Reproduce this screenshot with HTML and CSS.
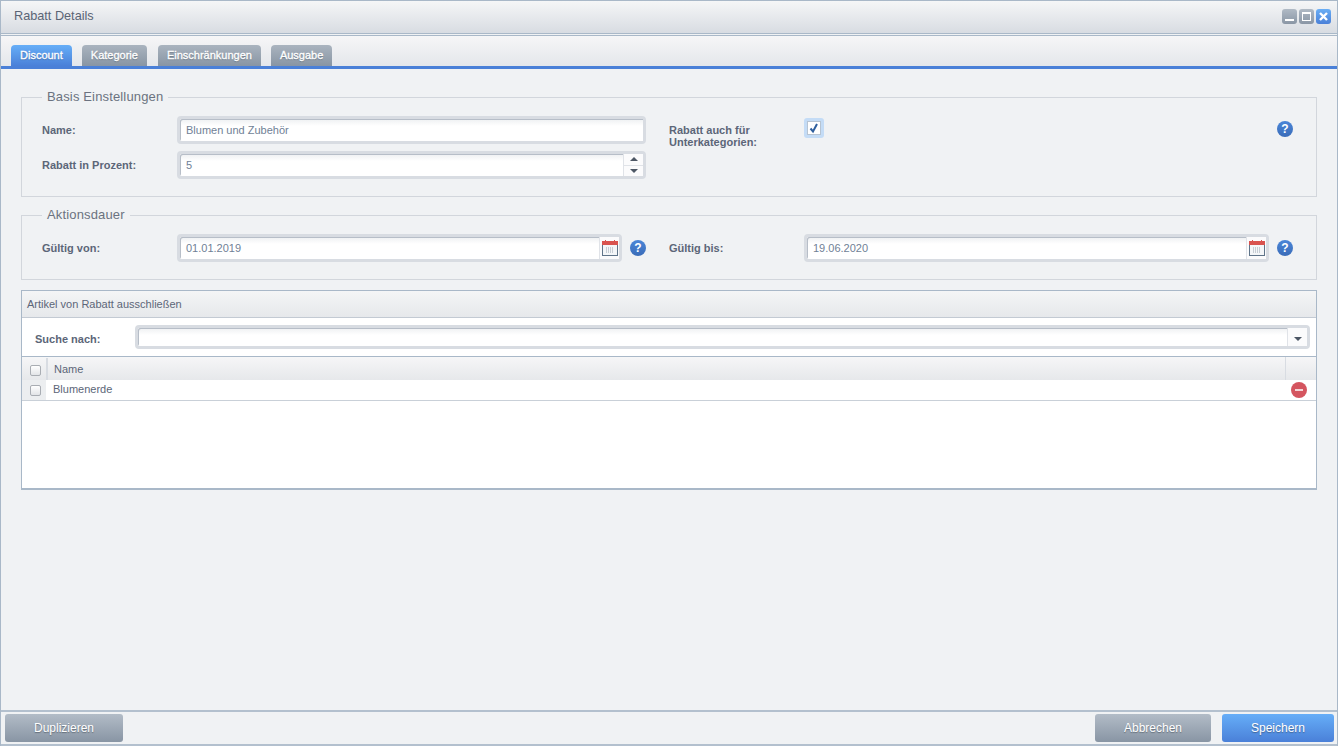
FILE: index.html
```html
<!DOCTYPE html>
<html lang="de">
<head>
    <meta charset="UTF-8">
    <title>Rabatt Details</title>
    <link rel="stylesheet" href="styles.css">
</head>
<body>
    <div class="window">
        <!-- Title bar -->
        <div class="title-bar">
            <div class="title">Rabatt Details</div>
            <div class="win-buttons">
                <div class="win-btn"><svg width="15" height="15" viewBox="0 0 15 15"><rect x="3" y="10" width="9" height="2" fill="#fff"/></svg></div>
                <div class="win-btn"><svg width="15" height="15" viewBox="0 0 15 15"><rect x="3.5" y="3.5" width="8" height="8" fill="none" stroke="#fff"/><rect x="3" y="3" width="9" height="2" fill="#fff"/></svg></div>
                <div class="win-btn win-btn-close"><svg width="15" height="15" viewBox="0 0 15 15"><path d="M4 4l7 7M11 4l-7 7" stroke="#fff" stroke-width="2.4"/></svg></div>
            </div>
        </div>

        <!-- Tabs -->
        <div class="tab-bar">
            <div class="tab tab-active">Discount</div>
            <div class="tab">Kategorie</div>
            <div class="tab tab-wide">Einschränkungen</div>
            <div class="tab">Ausgabe</div>
        </div>

        <div class="content">
            <fieldset class="group group-basis">
                <legend>Basis Einstellungen</legend>
                <div class="col col-left">
                    <div class="row">
                        <label>Name:</label>
                        <div class="field field-wide"><div class="field-value">Blumen und Zubehör</div></div>
                    </div>
                    <div class="row">
                        <label>Rabatt in Prozent:</label>
                        <div class="field field-wide">
                            <div class="field-value">5</div>
                            <div class="spinner">
                                <div class="spin-btn"><span class="arrow-up"></span></div>
                                <div class="spin-btn"><span class="arrow-down"></span></div>
                            </div>
                        </div>
                    </div>
                </div>
                <div class="col col-right">
                    <label class="label-two">Rabatt auch für Unterkategorien:</label>
                    <div class="checkbox-focus">
                        <svg width="12" height="12" viewBox="0 0 12 12"><path d="M2.5 6.5l2.5 3 4-7.5" fill="none" stroke="#2f5f9e" stroke-width="2"/></svg>
                    </div>
                    <div class="help help-end">?</div>
                </div>
            </fieldset>

            <fieldset class="group group-dates">
                <legend>Aktionsdauer</legend>
                <div class="row">
                    <label>Gültig von:</label>
                    <div class="field field-date">
                        <div class="field-value">01.01.2019</div>
                        <div class="trigger">
                            <svg width="16" height="16" viewBox="0 0 16 16">
                                <rect x="0.5" y="1.5" width="15" height="14" fill="#f4f6f8" stroke="#5f7489"/>
                                <rect x="0" y="1" width="16" height="4" fill="#d9534f"/>
                                <rect x="3" y="0" width="1" height="2" fill="#d9534f"/>
                                <rect x="12" y="0" width="1" height="2" fill="#d9534f"/>
                                <path d="M4 8h8M4 10h8M4 12h8" stroke="#9aa5b1" stroke-width="1" stroke-dasharray="1 1"/>
                            </svg>
                        </div>
                    </div>
                    <div class="help">?</div>
                    <label class="label-until">Gültig bis:</label>
                    <div class="field field-date field-date-end">
                        <div class="field-value">19.06.2020</div>
                        <div class="trigger">
                            <svg width="16" height="16" viewBox="0 0 16 16">
                                <rect x="0.5" y="1.5" width="15" height="14" fill="#f4f6f8" stroke="#5f7489"/>
                                <rect x="0" y="1" width="16" height="4" fill="#d9534f"/>
                                <rect x="3" y="0" width="1" height="2" fill="#d9534f"/>
                                <rect x="12" y="0" width="1" height="2" fill="#d9534f"/>
                                <path d="M4 8h8M4 10h8M4 12h8" stroke="#9aa5b1" stroke-width="1" stroke-dasharray="1 1"/>
                            </svg>
                        </div>
                    </div>
                    <div class="help">?</div>
                </div>
            </fieldset>

            <!-- Excluded articles -->
            <div class="panel">
                <div class="panel-head">Artikel von Rabatt ausschließen</div>
                <div class="search-row">
                    <label>Suche nach:</label>
                    <div class="field field-search">
                        <div class="field-value"></div>
                        <div class="trigger trigger-combo"><span class="arrow-down"></span></div>
                    </div>
                </div>
                <div class="grid-head">
                    <div class="cell-check"><span class="check"></span></div>
                    <div class="cell-name">Name</div>
                    <div class="cell-action"></div>
                </div>
                <div class="grid-row">
                    <div class="cell-check"><span class="check"></span></div>
                    <div class="cell-name cell-name-row">Blumenerde</div>
                    <div class="cell-action"><span class="remove"></span></div>
                </div>
            </div>
        </div>

        <div class="footer">
            <button class="btn btn-dup">Duplizieren</button>
            <div class="spacer"></div>
            <button class="btn btn-cancel">Abbrechen</button>
            <button class="btn btn-save">Speichern</button>
        </div>
    </div>
</body>
</html>
```

FILE: styles.css
```css
* {
    box-sizing: border-box;
}

html, body {
    margin: 0;
    height: 100%;
    overflow: hidden;
}

body {
    font-family: "Liberation Sans", Arial, sans-serif;
    font-size: 11px;
    color: #5c6678;
}

.window {
    height: 746px;
    display: flex;
    flex-direction: column;
    background: #f0f2f4;
    border-left: 1px solid #a9b8c8;
    border-right: 1px solid #a9b8c8;
}

/* Title bar */
.title-bar {
    height: 34px;
    flex: none;
    display: flex;
    align-items: center;
    justify-content: space-between;
    padding: 0 6px 2px 13px;
    border-top: 1px solid #a9b8c8;
    border-bottom: 1px solid #a9b8c8;
    background: linear-gradient(#f5f6f7, #d8dce2);
}

.title {
    font-size: 12.7px;
    color: #5a6475;
}

.win-buttons {
    display: flex;
    gap: 2px;
    margin-top: 1px;
}

.win-btn {
    width: 15px;
    height: 15px;
    border-radius: 3px;
    background: linear-gradient(#b0bac5, #8a96a5);
}

.win-btn svg {
    display: block;
}

.win-btn-close {
    background: linear-gradient(#6aaef5, #4a80d8);
}

/* Tabs */
.tab-bar {
    height: 34px;
    flex: none;
    margin-top: 1px;
    display: flex;
    align-items: flex-end;
    gap: 10px;
    padding-left: 10px;
    border-top: 1px solid #a9b8c8;
    border-bottom: 3px solid #4a80d8;
    background: linear-gradient(#f6f6f7, #e4e7eb);
}

.tab {
    height: 21px;
    line-height: 21px;
    padding: 0 9px;
    border-radius: 4px 4px 0 0;
    background: linear-gradient(#aab4bf, #8895a4);
    color: #fff;
    font-size: 11px;
    -webkit-text-stroke: 0.3px #fff;
    text-shadow: 0 1px 1px rgba(50, 60, 70, 0.4);
}

.tab-active {
    background: linear-gradient(#66aef8, #4a80d8);
}

.tab-wide {
    margin-left: 1px;
}

/* Content */
.content {
    flex: 1;
    padding: 0 20px;
    min-height: 0;
}

.group {
    margin: 0;
    padding: 10px 0 0 20px;
    border: 1px solid #d2d6dc;
}

.group legend {
    padding: 0 5px 2px;
    font-size: 13px;
    line-height: 15px;
    color: #6b7280;
    letter-spacing: 0.15px;
}

.group-basis {
    height: 108px;
    margin-top: 20px;
    display: flex;
}

.group-dates {
    height: 73px;
    margin-top: 10px;
}

label {
    font-weight: bold;
    font-size: 11px;
    color: #5c6678;
}

.row {
    display: flex;
    align-items: center;
    height: 28px;
}

.row label {
    width: 135px;
    flex: none;
}

.col-left .row + .row {
    margin-top: 7px;
}

.col-left {
    width: 604px;
    flex: none;
}

.col-right {
    flex: 1;
    display: flex;
    align-items: flex-start;
    padding-left: 23px;
}

.label-two {
    width: 135px;
    flex: none;
    line-height: 12px;
    margin-top: 8px;
}

/* Inputs */
.field {
    display: flex;
    height: 28px;
    border: 3px solid #d8dce2;
    border-radius: 4px;
    background: #fff;
}

.field-value {
    flex: 1;
    padding-left: 6px;
    line-height: 22px;
    font-size: 11px;
    color: #707f96;
    border-radius: 2px 0 0 2px;
    background: linear-gradient(#eef0f2, #fff 7px);
    box-shadow: inset 1px 1px 0 #b7bec8;
}

.field-wide {
    width: 469px;
}

.field-date {
    width: 445px;
    flex: none;
}

.field-date-end {
    width: 465px;
}

.field-search {
    width: 1175px;
    height: 24px;
}

.spinner {
    width: 20px;
    display: flex;
    flex-direction: column;
    gap: 1px;
    border-left: 1px solid #e0e3e8;
    background: #e0e3e8;
}

.spin-btn {
    flex: 1;
    display: flex;
    align-items: center;
    justify-content: center;
    background: #fbfbfc;
}

.arrow-up, .arrow-down {
    width: 0;
    height: 0;
    border-left: 4px solid transparent;
    border-right: 4px solid transparent;
}

.arrow-up {
    border-bottom: 4px solid #4c5664;
}

.arrow-down {
    border-top: 4px solid #4c5664;
}

.trigger {
    width: 20px;
    flex: none;
    display: flex;
    align-items: center;
    justify-content: center;
    border-left: 1px solid #e0e3e8;
    background: #fbfbfc;
}

.trigger-combo {
    padding-top: 3px;
}

/* Checkbox and help */
.checkbox-focus {
    width: 20px;
    height: 20px;
    margin-top: 2px;
    border: 3px solid #c4dcf6;
    border-radius: 3px;
    background: #fff;
    box-shadow: inset 0 0 0 1px #b7c4d2;
    display: flex;
    align-items: center;
    justify-content: center;
}

.help {
    width: 16px;
    height: 16px;
    flex: none;
    margin-left: 8px;
    border-radius: 50%;
    background: linear-gradient(#4a86d8, #3a6cb8);
    color: #fff;
    font-size: 12px;
    font-weight: bold;
    line-height: 16px;
    text-align: center;
}

.help-end {
    margin-left: auto;
    margin-top: 5px;
    margin-right: 23px;
}

.row .label-until {
    margin-left: 23px;
}

/* Panel */
.panel {
    margin-top: 10px;
    height: 200px;
    border: 1px solid #a9b8c8;
    border-bottom-width: 2px;
    background: #fff;
}

.panel-head {
    height: 27px;
    line-height: 26px;
    padding-left: 5px;
    font-size: 11px;
    color: #5c6678;
    border-bottom: 1px solid #c3cad3;
    background: linear-gradient(#f4f5f6, #e6e8eb);
}

.search-row {
    height: 39px;
    display: flex;
    align-items: center;
    justify-content: space-between;
    padding: 0 6px 0 13px;
    border-bottom: 1px solid #a9b8c8;
}

.search-row label {
    margin-top: 4px;
}

.grid-head {
    height: 23px;
    display: flex;
    align-items: stretch;
    background: linear-gradient(#f6f6f7, #e6e8eb);
}

.grid-row {
    height: 21px;
    display: flex;
    border-bottom: 1px solid #c9d0d8;
}

.cell-check {
    width: 26px;
    flex: none;
    display: flex;
    align-items: center;
    justify-content: center;
    padding-left: 2px;
    background: #eceef0;
    border-right: 2px solid #fff;
}

.grid-head .cell-check {
    background: none;
    border-right: 2px solid #d8dce2;
    margin-top: 1px;
    padding-top: 2px;
}

.check {
    width: 11px;
    height: 11px;
    border: 1px solid #a9adb3;
    border-radius: 2px;
    background: linear-gradient(#fff, #e2e4e7);
}

.cell-name {
    flex: 1;
    padding-left: 6px;
    line-height: 24px;
    font-size: 11px;
    color: #5c6678;
}

.grid-row .cell-name-row {
    padding-left: 5px;
    line-height: 18px;
}

.cell-action {
    width: 31px;
    flex: none;
    display: flex;
    align-items: center;
    justify-content: flex-end;
    padding-right: 9px;
}

.grid-head .cell-action {
    border-left: 1px solid #d8dce2;
}

.remove {
    width: 16px;
    height: 16px;
    border-radius: 50%;
    background: #d4555f;
    position: relative;
}

.remove::after {
    content: "";
    position: absolute;
    left: 4px;
    top: 7px;
    width: 8px;
    height: 2px;
    background: #f3d5d7;
}

/* Footer */
.footer {
    height: 36px;
    flex: none;
    display: flex;
    align-items: center;
    padding: 0 3px 1px 4px;
    border-top: 2px solid #b3c0ce;
    border-bottom: 2px solid #b3c0ce;
    background: #f0f2f4;
}

.spacer {
    flex: 1;
}

.btn {
    height: 28px;
    border: none;
    border-radius: 3px;
    font-family: "Liberation Sans", Arial, sans-serif;
    font-size: 12px;
    color: #fff;
    text-shadow: 0 1px 1px rgba(50, 60, 70, 0.5);
    background: linear-gradient(#b2bcc7, #8895a4);
}

.btn-dup {
    width: 118px;
}

.btn-cancel {
    width: 116px;
}

.btn-save {
    width: 112px;
    margin-left: 11px;
    background: linear-gradient(#66aef8, #4a80d8);
}
```
